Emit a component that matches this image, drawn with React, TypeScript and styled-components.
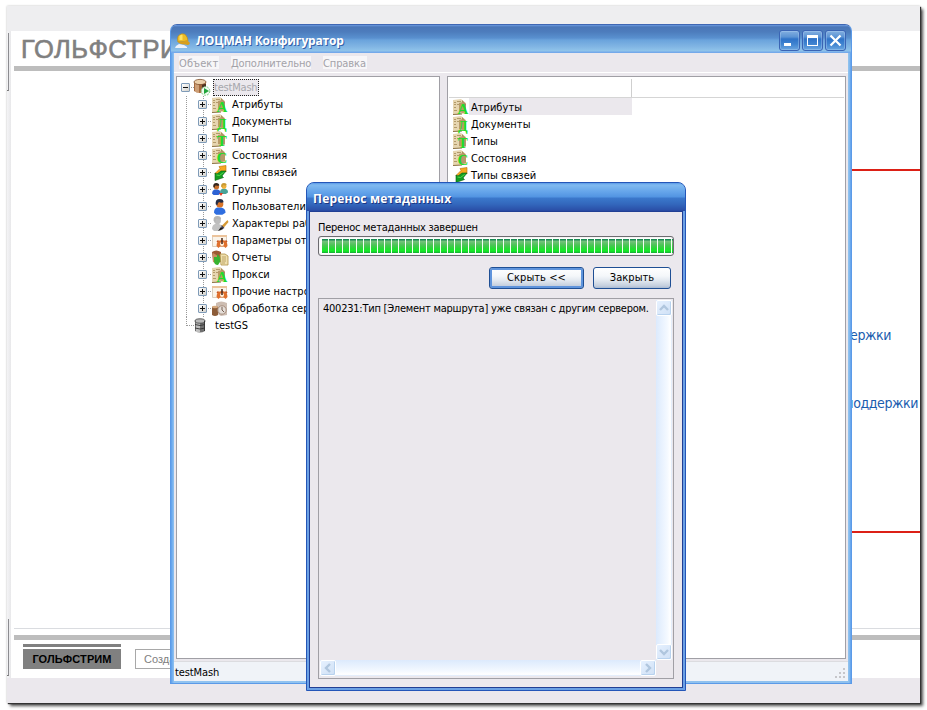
import React from 'react';
import styled, { createGlobalStyle, css } from 'styled-components';

const ui = '"DejaVu Sans Condensed", "DejaVu Sans", sans-serif';

const Global = createGlobalStyle`
  * { box-sizing: border-box; }
  html, body { margin: 0; background: #fff; overflow: hidden; }
  body { font-family: ${ui}; font-stretch: condensed; font-size: 11px; color: #000; }
`;

const Desktop = styled.main`
  position: relative;
  width: 927px;
  height: 710px;
  padding: 6px 0 0 7px;
  overflow: hidden;
  background: #fff;
`;

const Page = styled.section`
  display: flex;
  flex-direction: column;
  width: 913px;
  height: 697px;
  background: #ebe8ed;
  box-shadow: 1px 1px 1px #333, 3px 3px 3px rgba(0, 0, 0, 0.7), 0 0 2px rgba(0, 0, 0, 0.25);
`;

const PageTop = styled.div`
  height: 25px;
  background: #eeeef0;
`;

const PageBody = styled.div`
  display: flex;
  height: 647px;
`;

const Strip = styled.div`
  display: flex;
  flex-direction: column;
  justify-content: space-between;
  width: 4px;
  padding: 2px 0;
  background: linear-gradient(90deg, #f4f4f6, #e8e8ea);
`;

const StripMark = styled.div<{ $h: number }>`
  width: 2px;
  height: ${(p) => p.$h}px;
  border-right: 1px solid #8c8c90;
  border-bottom: 1px solid #777;
`;

const PageContent = styled.div`
  display: flex;
  flex-direction: column;
  flex: 1;
  padding-left: 3px;
  background: #fff;
`;

const Brand = styled.h1`
  margin: 0;
  height: 35px;
  padding-left: 7px;
  font: 400 25.5px/37px "Liberation Sans", sans-serif;
  letter-spacing: 0.5px;
  color: #808080;
  -webkit-text-stroke: 0.6px #808080;
`;

const GrayBar = styled.div`
  height: 5px;
  background: #bdbdbd;
`;

const Article = styled.div`
  display: flex;
  flex-direction: column;
  align-items: flex-end;
  height: 558px;
  margin-bottom: 6px;
  padding: 98px 0 0 400px;
  border-bottom: 1px solid #dadce0;
`;

const RedLine = styled.div`
  width: 100%;
  height: 2px;
  background: #dc2016;
`;

const Links = styled.div`
  display: flex;
  flex-direction: column;
  height: 360px;
  width: 100%;
  padding-top: 154px;
  gap: 48px;
  align-items: flex-end;
`;

const PageLink = styled.a<{ $right: number }>`
  margin-right: ${(p) => p.$right}px;
  font-size: 14px;
  line-height: 20px;
  letter-spacing: -0.4px;
  color: #1a5cae;
`;

const Footer = styled.div`
  display: flex;
  gap: 14px;
  padding: 4px 0 0 9px;
`;

const FooterTab = styled.div`
  width: 98px;
  height: 25px;
  border-top: 3px solid #808080;
  padding-top: 2px;
`;

const FooterTabLabel = styled.div`
  height: 20px;
  background: #808080;
  text-align: center;
  font: 700 11px/20px "Liberation Sans", sans-serif;
  letter-spacing: 0.1px;
`;

const FooterBox = styled.div`
  width: 90px;
  height: 20px;
  margin-top: 5px;
  padding-left: 8px;
  border: 1px solid #a8a8a8;
  font: 400 11px/18px "Liberation Sans", sans-serif;
  color: #808080;
`;

const MainWindow = styled.section`
  position: absolute;
  left: 170px;
  top: 24px;
  width: 682px;
  height: 660px;
  display: flex;
  flex-direction: column;
  padding: 0 2px 1px;
  border: 1px solid #5b9ae8;
  border-top-color: #3f67b4;
  border-radius: 7px 7px 0 0;
  background: linear-gradient(90deg, #5d9fec 0, #91c3f0 3px, #8fc1ee 678px, #5d9fec 100%);
  overflow: hidden;
`;

const MainTitle = styled.header`
  display: flex;
  flex: none;
  align-items: center;
  height: 28px;
  margin: 0 -2px;
  padding: 3px 5px 0 4px;
  background: linear-gradient(#6a9ae0 0, #4a76b8 2px, #4d7dbd 7px, #5990cf 13px, #6aa3dc 15px, #82b6e4 22px, #90c4ea 26px, #74a9ea 27px);
`;

const TitleText = styled.h2<{ $spacing: number; $gap: number; $color: string }>`
  margin: 0 0 0 ${(p) => p.$gap}px;
  flex: 1;
  font: 700 12px/20px "Open Sans", sans-serif;
  font-stretch: normal;
  letter-spacing: ${(p) => p.$spacing}px;
  color: #fff;
  white-space: nowrap;
  text-shadow: 1px 1px 0 ${(p) => p.$color};
`;

const Caption = styled.button`
  display: flex;
  width: 21px;
  height: 21px;
  margin-left: 2px;
  padding: 0;
  border: 1px solid #3a64b4;
  border-radius: 3px;
  background: linear-gradient(#83afe0 0, #5b93d4 6px, #2f73c8 8px, #3f83d0 13px, #6ba6e0 100%);
  box-shadow: inset 0 0 0 1px rgba(175, 208, 242, 0.4);
`;

const MainClient = styled.div`
  display: flex;
  flex-direction: column;
  flex: 1;
  min-height: 0;
  margin: 0 1px 1px;
  background: #ebe8ed;
`;

const MenuBar = styled.nav`
  display: flex;
  flex: none;
  gap: 12px;
  height: 20px;
  padding: 3px 0 0 5px;
  border-bottom: 1px solid #fff;
  color: #a3a2a8;
`;

const MenuItem = styled.span<{ $w: number; $spacing: number }>`
  width: ${(p) => p.$w}px;
  height: 13px;
  line-height: 15px;
  background: #f7f6f8;
  letter-spacing: ${(p) => p.$spacing}px;
  white-space: nowrap;
`;

const Panes = styled.div`
  display: flex;
  flex: none;
  gap: 7px;
  height: 583px;
  margin: 3px 2px 0;
`;

const Pane = styled.div<{ $w: number }>`
  width: ${(p) => p.$w}px;
  border: 1px solid #a09fa5;
  background: #fff;
  overflow: hidden;
`;

const Tree = styled.div`
  display: flex;
  flex-direction: column;
  padding: 2px 0 0 4px;
`;

const dotted = css`
  background-image: linear-gradient(#9a9a9a 50%, transparent 50%);
  background-size: 1px 2px;
  background-repeat: repeat-y;
  background-position: 5px 0;
`;

const Branch = styled.div`
  padding-left: 17px;
  ${dotted}
`;

const ChildRows = styled.div`
  ${dotted}
`;

const TreeRow = styled.div`
  display: flex;
  align-items: center;
  height: 17px;
  white-space: nowrap;
`;

const Elbow = styled.span`
  width: 8px;
  height: 9px;
  margin: -8px 0 0 5px;
  border: 1px dotted #9a9a9a;
  border-width: 0 0 1px 1px;
`;

const Toggle = styled.span`
  display: flex;
  width: 9px;
  height: 9px;
  margin-top: -1px;
  border: 1px solid #7f9bb8;
  border-radius: 1px;
  background: linear-gradient(135deg, #fff, #d4d2cc);
`;

const Dash = styled.span<{ $w: number }>`
  width: ${(p) => p.$w}px;
  height: 1px;
  background: repeating-linear-gradient(90deg, transparent 0 1px, #9a9a9a 1px 2px);
`;

const Name = styled.span<{ $gap: number; $drop?: boolean }>`
  margin-left: ${(p) => p.$gap}px;
  margin-top: ${(p) => (p.$drop ? 2 : 0)}px;
  line-height: 16px;
  letter-spacing: 0.03px;
`;

const SelectedName = styled.span`
  width: 46px;
  height: 17px;
  margin-left: 3px;
  border: 1px dotted #222;
  background: #ebe8ed;
  line-height: 15px;
  letter-spacing: -0.2px;
  color: #a6a6ac;
`;

const ListHead = styled.div`
  display: flex;
  height: 21px;
  margin: 0 1px;
  border-bottom: 1px solid #d5d5d5;
`;

const ListColumn = styled.div`
  width: 183px;
  margin: 2px 0 0;
  border-right: 1px solid #cfcfcf;
`;

const ListRow = styled.div<{ $selected?: boolean }>`
  display: flex;
  align-items: center;
  width: 184px;
  height: 17px;
  padding-left: 5px;
  background: ${(p) => (p.$selected ? 'linear-gradient(90deg, #fff 21px, #ebe8ed 21px)' : '#fff')};
`;

const StatusBar = styled.footer`
  display: flex;
  justify-content: space-between;
  flex: 1;
  min-height: 0;
  margin-top: 2px;
  padding-left: 1px;
  border-top: 1px solid #dcdce0;
  background: #f0f3f8;
  line-height: 21px;
  letter-spacing: -0.1px;
`;

const Dialog = styled.section`
  position: absolute;
  left: 306px;
  top: 182px;
  width: 380px;
  height: 509px;
  display: flex;
  flex-direction: column;
  border: 1px solid #2456b8;
  border-radius: 8px 8px 0 0;
  background: #6ba0e4;
  overflow: hidden;
`;

const DialogTitle = styled.header`
  display: flex;
  align-items: center;
  height: 28px;
  padding: 4px 0 0 6px;
  background: linear-gradient(#5a9ae6 0, #80baf0 2px, #64a4ea 9px, #5294e2 14px, #3b78cc 15px, #3368bd 21px, #2b50a8 27px, #2747a0);
`;

const DialogClient = styled.div`
  display: flex;
  flex-direction: column;
  flex: 1;
  margin: 0 2px 2px;
  padding: 7px 8px 0;
  border: 1px solid #213f94;
  background: #ebe8ed;
`;

const Message = styled.p`
  margin: 0;
  height: 16px;
  line-height: 18px;
  letter-spacing: -0.24px;
  white-space: nowrap;
`;

const Progress = styled.div`
  height: 20px;
  margin-top: 1px;
  padding: 2px 0 2px 3px;
  border: 1px solid #6c6b70;
  border-radius: 3px;
  background: #fff;
  box-shadow: inset 0 0 1px #999;
`;

const ProgressFill = styled.div`
  height: 14px;
  background:
    repeating-linear-gradient(90deg, transparent 0 6px, #f4fff4 6px 7px),
    linear-gradient(#178a52 0, #178a52 1px, #76c27e 2px, #4cc457 6px, #20dc30 10px, #14ee24 12px, #18a43a 14px);
`;

const Actions = styled.div`
  display: flex;
  justify-content: flex-end;
  gap: 9px;
  height: 22px;
  margin: 11px 3px 9px 0;
`;

const Button = styled.button<{ $w: number; $focused?: boolean }>`
  width: ${(p) => p.$w}px;
  height: 22px;
  padding: 0;
  border: 1px solid #1f4f94;
  border-radius: 3px;
  background: linear-gradient(#fff 0, #f4f7fa 8px, #e4eaf1 12px, #c3cedd 18px, #a9bad2 100%);
  box-shadow: ${(p) => (p.$focused ? 'inset 0 0 0 2px #5f94dc' : 'none')};
  font: 400 11px/20px ${ui};
  font-stretch: condensed;
  letter-spacing: 0.05px;
  color: #000;
`;

const Memo = styled.div`
  display: grid;
  grid-template-columns: minmax(0, 1fr) 16px;
  grid-template-rows: 1fr 16px;
  height: 381px;
  padding: 1px 1px 2px;
  border: 1px solid #a09fa5;
`;

const MemoText = styled.div`
  padding-left: 3px;
`;

const ScrollTrack = styled.div<{ $vertical?: boolean }>`
  display: flex;
  flex-direction: ${(p) => (p.$vertical ? 'column' : 'row')};
  justify-content: space-between;
  background: linear-gradient(${(p) => (p.$vertical ? '90deg' : '180deg')}, #dceafd, #f4f9ff 70%, #fff 90%, #d8e6fa);
`;

const ScrollButton = styled.button`
  display: flex;
  width: 16px;
  height: 16px;
  padding: 0;
  border: 1px solid #fff;
  border-radius: 2px;
  background: linear-gradient(135deg, #e6f1ff, #cfe0f5);
  box-shadow: inset -1px -1px 0 #b8d2ee;
`;

const Glyph = styled.svg`
  display: block;
  flex: none;
  overflow: visible;
`;

const IconLetter = styled.text`
  font-family: "Liberation Serif", serif;
  font-weight: 700;
  font-stretch: normal;
  text-anchor: middle;
  fill: #1fdc2a;
`;

const chevrons = {
  up: 'M3 9 L7 5 L11 9',
  down: 'M3 5 L7 9 L11 5',
  left: 'M9 3 L5 7 L9 11',
  right: 'M5 3 L9 7 L5 11',
};

function Scroll({ dir }: { dir: keyof typeof chevrons }) {
  return (
    <ScrollButton aria-label={dir}>
      <Glyph width="14" height="14" viewBox="0 0 14 14">
        <path d={chevrons[dir]} fill="none" stroke="#b0c6de" strokeWidth="2.4" />
      </Glyph>
    </ScrollButton>
  );
}

function Expander({ open }: { open?: boolean }) {
  return (
    <Toggle>
      <Glyph width="7" height="7" viewBox="0 0 7 7" shapeRendering="crispEdges">
        <path d={open ? 'M1 3h5v1H1z' : 'M1 3h5v1H1z M3 1h1v5H3z'} fill="#111" />
      </Glyph>
    </Toggle>
  );
}

type IconKind =
  | 'A' | 'Д' | 'Т' | 'С' | 'links' | 'groups' | 'user' | 'roles' | 'settings' | 'reports' | 'server';

function Person({ x, y, s, head, hair, body }: { x: number; y: number; s: number; head: string; hair: string; body: string }) {
  return (
    <g transform={`translate(${x} ${y}) scale(${s})`}>
      <path d="M0 13q0-4 3-5h4q4 1 4 5l-3 2H2z" fill={body} />
      <circle cx="5.5" cy="4.7" r="3.4" fill={head} />
      <path d="M1.6 5Q1 0 5.5 0q3.6 0 3.6 3.2Q6 4 5 2.8 3.5 3 3.2 6z" fill={hair} />
    </g>
  );
}

function Icon({ kind }: { kind: IconKind }) {
  if (kind.length === 1) {
    return (
      <Glyph width="16" height="16" viewBox="0 0 16 16">
        <path d="M0 1l8-1 5 4v10l-4 1-9 1z" fill="#e6d5b0" />
        <path d="M9 1l4 4v3L9 6z" fill="#a98c5c" />
        <path d="M6 4l4-1 3 4v6l-3 1-4-1z" fill="#b79a6a" />
        <path d="M1 3.500h2M4 2.500h4M1 5.500h2M4 5.500h2M1 8.500h2M1 11.500h3" stroke="#a58a58" strokeWidth=".8" />
        <path d="M0 15.500l9-.5" stroke="#8d7448" />
        <IconLetter x="9.800" y="14.500" fontSize={kind === 'Д' ? 14 : 15}>{kind}</IconLetter>
      </Glyph>
    );
  }
  return (
    <Glyph width="16" height="16" viewBox="0 0 16 16">
      {kind === 'links' && (
        <>
          <path d="M7 1.500L14 .5V7l-2-1-4 3-5-.5 5-5z" fill="#f7a820" stroke="#b8700c" strokeWidth=".6" />
          <path d="M14 6l-4 5 1.500 1.500L3 15.500V8l2 1 4-3z" fill="#149c22" stroke="#075f10" strokeWidth=".6" />
          <path d="M4.500 10l3 .5 4-3" stroke="#55dc48" fill="none" />
        </>
      )}
      {kind === 'groups' && (
        <>
          <Person x={0} y={1} s={0.8} head="#c9702c" hair="#33251e" body="#2c62d4" />
          <Person x={8} y={1} s={0.73} head="#f0b23c" hair="#c99a34" body="#4aa398" />
          <path d="M7 11l2 3 2-3" fill="#e63b20" />
        </>
      )}
      {kind === 'user' && <Person x={2} y={0} s={1.05} head="#d9752a" hair="#252c44" body="#2f6ee0" />}
      {kind === 'roles' && (
        <>
          <Person x={0} y={0} s={1} head="#bdbdbd" hair="#b5b5b5" body="#c2c2c2" />
          <path d="M15.500 4l-6 6 2 2 5-6z" fill="#d79a36" />
          <path d="M9.500 9l3 3-3 1.500z" fill="#3d3a52" />
          <path d="M9 11l2 2-5 2z" fill="#171717" />
        </>
      )}
      {kind === 'settings' && (
        <>
          <path d="M.5 2.500h14v11H.5z" fill="#faf4ea" stroke="#dccfbe" />
          <path d="M0 2h15v2H0z" fill="#ecc49c" />
          <path d="M4.500 13q0-6 5.500-6t5.500 6l-2 2-1.500-1.500H8L6.500 15z" fill="#e0702c" />
          <path d="M5 9l1.500-1.500M13.500 7.500L15 9" stroke="#c9541c" strokeWidth="1.500" />
          <circle cx="10" cy="11" r="2" fill="#fff0dc" />
          <path d="M9.200 5h1.600v6H9.200z" fill="#4f2f22" />
        </>
      )}
      {kind === 'reports' && (
        <>
          <path d="M0 2q4-3 9 0v10H1z" fill="#9c5a33" />
          <path d="M1 3l5 3v8l-5-2z" fill="#c98e60" />
          <path d="M2 7h3V4l5 5-4 6q-4 0-4-4z" fill="#38b330" />
          <path d="M8 4h5l3 2v9H9z" fill="#efdfae" stroke="#ae9048" strokeWidth=".8" />
          <path d="M10 7h4M10 9h4M10 11h4M10 13h3" stroke="#a98c4c" strokeWidth=".7" />
        </>
      )}
      {kind === 'server' && (
        <>
          <path d="M4 2q5-3 11 0v12l-6 1-5-3z" fill="#cdbdb2" />
          <path d="M0 6q3-2 6 0v8q-3 2-6 0z" fill="#8c5c38" />
          <ellipse cx="3" cy="6" rx="3" ry="1.300" fill="#d6aa80" />
          <circle cx="10" cy="9" r="4.200" fill="#e5ded8" stroke="#a68c7c" />
          <path d="M10 6v3l2 2" stroke="#735c50" fill="none" />
        </>
      )}
    </Glyph>
  );
}

function Database({ active }: { active?: boolean }) {
  if (active) {
    return (
      <Glyph width="16" height="17" viewBox="0 0 16 17">
        <path d="M0 3v9q5 4 12 0V3z" fill="#a4683c" />
        <path d="M2 4v9M4 4v10" stroke="#dfb68e" strokeWidth="1.400" />
        <path d="M8 5h4v7l-4 2z" fill="#4e3322" />
        <ellipse cx="6" cy="3" rx="6" ry="2.600" fill="#ecd0aa" stroke="#80502d" strokeWidth=".8" />
        <circle cx="11.500" cy="12" r="4.300" fill="#effaef" stroke="#7fce87" strokeDasharray="2 1" />
        <path d="M10 9v6l5-3z" fill="#1fa53a" />
      </Glyph>
    );
  }
  return (
    <Glyph width="16" height="16" viewBox="0 0 16 16">
      <path d="M1 3v10q5 3 10 0V3z" fill="#707070" />
      <path d="M3 4v10M5 4v10" stroke="#d9d9d9" strokeWidth="1.500" />
      <ellipse cx="6" cy="3" rx="5" ry="2.200" fill="#b9b9b9" stroke="#3e3e3e" strokeWidth=".8" />
      <path d="M1 6.500q5 2 10 0M1 10q5 2 10 0M10.500 3v10" stroke="#333" fill="none" strokeWidth=".9" />
    </Glyph>
  );
}

const nodes: { icon: IconKind; label: string }[] = [
  { icon: 'A', label: 'Атрибуты' },
  { icon: 'Д', label: 'Документы' },
  { icon: 'Т', label: 'Типы' },
  { icon: 'С', label: 'Состояния' },
  { icon: 'links', label: 'Типы связей' },
  { icon: 'groups', label: 'Группы' },
  { icon: 'user', label: 'Пользователи' },
  { icon: 'roles', label: 'Характеры работ' },
  { icon: 'settings', label: 'Параметры отчетов' },
  { icon: 'reports', label: 'Отчеты' },
  { icon: 'A', label: 'Прокси' },
  { icon: 'settings', label: 'Прочие настройки' },
  { icon: 'server', label: 'Обработка сервера' },
];

export default function App() {
  return (
    <>
      <Global />
      <Desktop>
        <Page>
          <PageTop />
          <PageBody>
            <Strip>
              <StripMark $h={58} />
              <StripMark $h={57} />
            </Strip>
            <PageContent>
              <Brand>ГОЛЬФСТРИМ</Brand>
              <GrayBar />
              <Article>
                <RedLine />
                <Links>
                  <PageLink $right={29}>Служба поддержки</PageLink>
                  <PageLink $right={2}>Центр поддержки</PageLink>
                </Links>
                <RedLine />
              </Article>
              <GrayBar />
              <Footer>
                <FooterTab>
                  <FooterTabLabel>ГОЛЬФСТРИМ</FooterTabLabel>
                </FooterTab>
                <FooterBox>Создать</FooterBox>
              </Footer>
            </PageContent>
          </PageBody>
        </Page>

        <MainWindow>
          <MainTitle>
            <Glyph width="16" height="16" viewBox="0 0 16 16">
              <path d="M1 13l3-2 5 1 3 2v1H0z" fill="#eef2fa" />
              <path d="M3 9Q1 2 7 .8q5-.6 6 7.200z" fill="#edbd28" stroke="#b98712" strokeWidth=".6" />
              <path d="M2 8q5 2 10-1l3 3q-1 3-4 1.500Q5 12 2 8z" fill="#d79f1e" />
              <path d="M4.500 3q2-2 3-1v5h-3z" fill="#ffe263" />
            </Glyph>
            <TitleText $gap={5} $spacing={-0.15} $color="#3260a8">ЛОЦМАН Конфигуратор</TitleText>
            <Caption aria-label="minimize">
              <Glyph width="19" height="19" viewBox="0 0 19 19"><path d="M4 12h7v3H4z" fill="#fff" /></Glyph>
            </Caption>
            <Caption aria-label="maximize">
              <Glyph width="19" height="19" viewBox="0 0 19 19"><path d="M4 4h11v11H4zM5 7v7h9V7z" fill="#fff" fillRule="evenodd" /></Glyph>
            </Caption>
            <Caption aria-label="close">
              <Glyph width="19" height="19" viewBox="0 0 19 19"><path d="M4.500 4.500l10 10M14.500 4.500l-10 10" stroke="#fff" strokeWidth="2.300" /></Glyph>
            </Caption>
          </MainTitle>
          <MainClient>
            <MenuBar>
              <MenuItem $w={40} $spacing={0.1}>Объект</MenuItem>
              <MenuItem $w={80} $spacing={-0.15}>Дополнительно</MenuItem>
              <MenuItem $w={44} $spacing={-0.1}>Справка</MenuItem>
            </MenuBar>
            <Panes>
              <Pane $w={264}>
                <Tree>
                  <TreeRow>
                    <Expander open />
                    <Dash $w={4} />
                    <Database active />
                    <SelectedName>testMash</SelectedName>
                  </TreeRow>
                  <Branch>
                    <ChildRows>
                      {nodes.map((n) => (
                        <TreeRow key={n.label}>
                          <Expander />
                          <Dash $w={5} />
                          <Icon kind={n.icon} />
                          <Name $gap={4}>{n.label}</Name>
                        </TreeRow>
                      ))}
                    </ChildRows>
                  </Branch>
                  <TreeRow>
                    <Elbow />
                    <Database />
                    <Name $gap={5}>testGS</Name>
                  </TreeRow>
                </Tree>
              </Pane>
              <Pane $w={399}>
                <ListHead><ListColumn /></ListHead>
                {nodes.slice(0, 5).map((n, i) => (
                  <ListRow key={n.label} $selected={i === 0}>
                    <Icon kind={n.icon} />
                    <Name $gap={2} $drop>{n.label}</Name>
                  </ListRow>
                ))}
              </Pane>
            </Panes>
            <StatusBar>
              testMash
              <Glyph width="14" height="17" viewBox="0 0 14 17" shapeRendering="crispEdges">
                <path d="M9 6h2v2H9zM5 10h2v2H5zM9 10h2v2H9zM1 14h2v2H1zM5 14h2v2H5zM9 14h2v2H9z" fill="#c6c6ca" />
              </Glyph>
            </StatusBar>
          </MainClient>
        </MainWindow>

        <Dialog>
          <DialogTitle>
            <TitleText $gap={0} $spacing={0.2} $color="#1c3684">Перенос метаданных</TitleText>
          </DialogTitle>
          <DialogClient>
            <Message>Перенос метаданных завершен</Message>
            <Progress><ProgressFill /></Progress>
            <Actions>
              <Button $w={95} $focused>Скрыть &lt;&lt;</Button>
              <Button $w={78}>Закрыть</Button>
            </Actions>
            <Memo>
              <MemoText>
                <Message>400231:Тип [Элемент маршрута] уже связан с другим сервером.</Message>
              </MemoText>
              <ScrollTrack $vertical>
                <Scroll dir="up" />
                <Scroll dir="down" />
              </ScrollTrack>
              <ScrollTrack>
                <Scroll dir="left" />
                <Scroll dir="right" />
              </ScrollTrack>
            </Memo>
          </DialogClient>
        </Dialog>
      </Desktop>
    </>
  );
}
